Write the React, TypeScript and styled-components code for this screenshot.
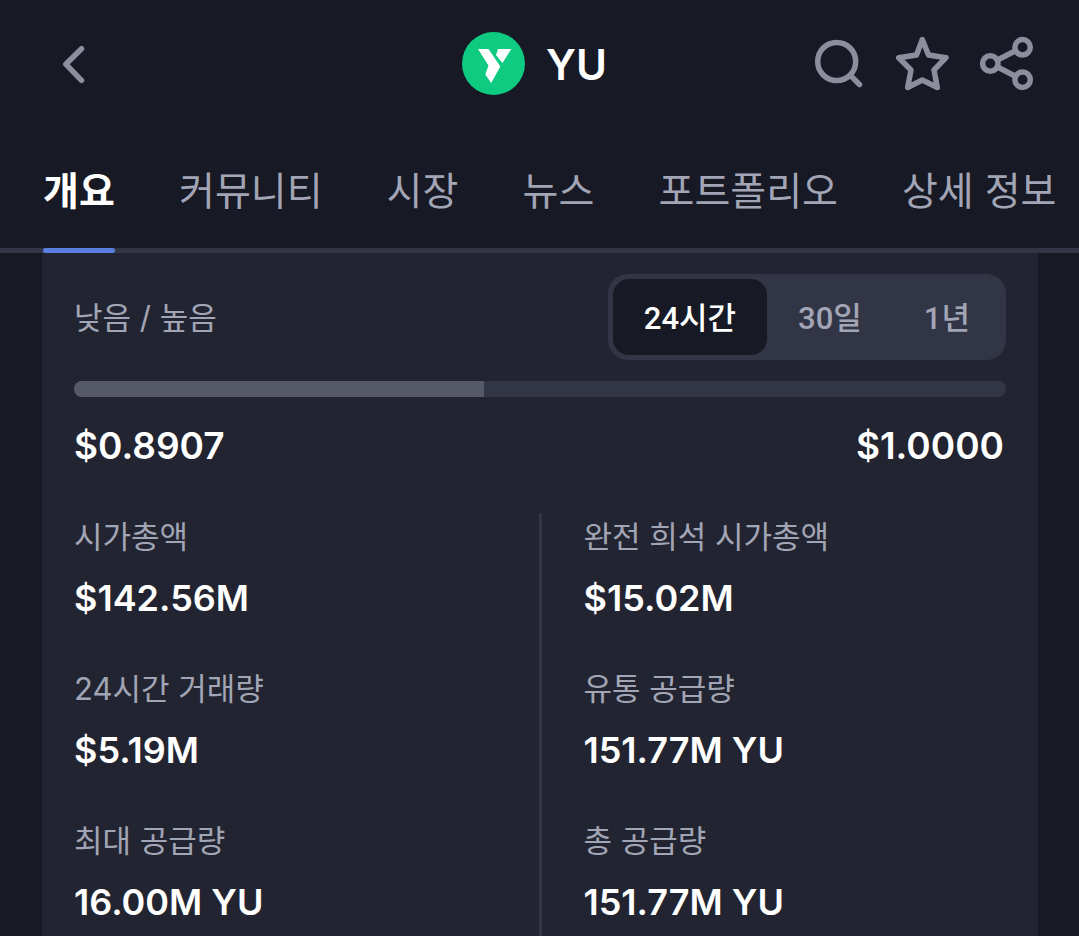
import React, { useState } from 'react';
import styled, { createGlobalStyle } from 'styled-components';

const GlobalStyle = createGlobalStyle`
  * { box-sizing: border-box; }
  body {
    margin: 0;
    background: #171924;
    color: #ffffff;
    font-family: Inter, "Noto Sans CJK KR", sans-serif;
    overflow-x: hidden;
  }
  button { font-family: inherit; border: 0; padding: 0; background: none; cursor: pointer; }
`;

const Page = styled.div`
  display: flex;
  flex-direction: column;
  min-height: 100vh;
  overflow: hidden;
`;

const Header = styled.header`
  display: grid;
  grid-template-columns: 1fr auto 1fr;
  align-items: center;
  height: 126px;
  padding: 0 42px;
  color: #8c8e9e;
`;

const IconButton = styled.button`
  display: flex;
  color: inherit;
`;

const Brand = styled.div`
  display: flex;
  align-items: center;
  gap: 21px;
  margin-right: 10px;
`;

const Ticker = styled.h1`
  margin: 0;
  padding-top: 4px;
  font-size: 42px;
  line-height: 48px;
  font-weight: 600;
  color: #ffffff;
`;

const Actions = styled.div`
  display: flex;
  justify-content: flex-end;
  gap: 24px;
`;

const Tabs = styled.nav`
  display: flex;
  gap: 64px;
  height: 127px;
  padding: 0 43px;
  box-shadow: inset 0 -5px #323546;
`;

const Tab = styled.a<{ $active?: boolean }>`
  position: relative;
  flex: none;
  min-width: 72px;
  padding-top: 37px;
  font-size: 39px;
  line-height: 56px;
  font-weight: ${(p) => (p.$active ? 700 : 400)};
  color: ${(p) => (p.$active ? '#ffffff' : '#a2a5b5')};
  text-decoration: none;
  white-space: nowrap;

  &::after {
    content: '';
    position: absolute;
    left: 0;
    right: 0;
    bottom: 0;
    height: 5px;
    border-radius: 3px;
    background: ${(p) => (p.$active ? '#5b7fe0' : 'transparent')};
  }
`;

const Card = styled.main`
  display: flex;
  flex-direction: column;
  flex: 1;
  margin: 0 41px 0 42px;
  padding: 21px 32px 0;
  background: #222531;
`;

const RangeHead = styled.div`
  display: flex;
  justify-content: space-between;
  align-items: center;
`;

const Label = styled.dt`
  padding-top: 2px;
  font-size: 31px;
  line-height: 44px;
  color: #a2a5b5;
`;

const Segments = styled.div`
  display: flex;
  height: 86px;
  padding: 5px;
  border-radius: 20px;
  background: #323546;
`;

const Segment = styled.button<{ $active?: boolean }>`
  padding: 4px 31px 0;
  border-radius: 16px;
  font-family: Roboto, "Noto Sans CJK KR", sans-serif;
  font-size: 31px;
  line-height: 44px;
  font-weight: 500;
  color: ${(p) => (p.$active ? '#ffffff' : '#a2a5b5')};
  background: ${(p) => (p.$active ? '#171924' : 'transparent')};
`;

const Track = styled.div`
  height: 16px;
  margin-top: 21px;
  border-radius: 8px;
  background: #323546;
  overflow: hidden;
`;

const Fill = styled.div`
  height: 100%;
  background: #555968;
`;

const Prices = styled.div`
  display: flex;
  justify-content: space-between;
  margin-top: 25px;
  padding-right: 2px;
  font-size: 37px;
  line-height: 48px;
  font-weight: 600;
`;

const Stats = styled.div`
  display: grid;
  grid-template-columns: 1fr 3px 1fr;
  flex: 1;
  margin-top: 43px;
`;

const Divider = styled.div`
  background: #323546;
`;

const Column = styled.dl<{ $inset?: boolean }>`
  display: flex;
  flex-direction: column;
  gap: 43px;
  margin: 0;
  padding-left: ${(p) => (p.$inset ? '42px' : '0')};
`;

const Stat = styled.div`
  display: flex;
  flex-direction: column;
  gap: 15px;
`;

const Value = styled.dd`
  margin: 0;
  font-size: 36px;
  line-height: 48px;
  font-weight: 600;
`;

const tabs = ['개요', '커뮤니티', '시장', '뉴스', '포트폴리오', '상세 정보'];
const ranges = ['24시간', '30일', '1년'];
const marketStats = [['시가총액', '$142.56M'], ['24시간 거래량', '$5.19M'], ['최대 공급량', '16.00M YU']];
const supplyStats = [['완전 희석 시가총액', '$15.02M'], ['유통 공급량', '151.77M YU'], ['총 공급량', '151.77M YU']];

function StatList({ items, inset }: { items: string[][]; inset?: boolean }) {
  return (
    <Column $inset={inset}>
      {items.map(([label, value]) => (
        <Stat key={label}>
          <Label>{label}</Label>
          <Value>{value}</Value>
        </Stat>
      ))}
    </Column>
  );
}

function Icon({ children }: { children: React.ReactNode }) {
  return (
    <svg
      width="60"
      height="60"
      viewBox="0 0 60 60"
      fill="none"
      stroke="currentColor"
      strokeWidth="5.5"
      strokeLinecap="round"
      strokeLinejoin="round"
      aria-hidden="true"
    >
      {children}
    </svg>
  );
}

export default function App() {
  const [range, setRange] = useState('24시간');
  return (
    <Page>
      <GlobalStyle />
      <Header>
        <IconButton aria-label="뒤로">
          <Icon>
            <path d="M39.5 15.7 23.8 31.2 39.5 47.3" />
          </Icon>
        </IconButton>
        <Brand>
          <svg width="63" height="63" viewBox="0 0 63 63" aria-hidden="true">
            <circle cx="31.5" cy="31.5" r="31.5" fill="#0ecb81" />
            <path d="M16 17H26.5L38.3 34.5 29.2 51 23.3 42.5 26.5 33.5Z" fill="#fff" />
            <path d="M36 17H49.3L40.500 31 34 23Z" fill="#fff" />
          </svg>
          <Ticker>YU</Ticker>
        </Brand>
        <Actions>
          <IconButton aria-label="검색">
            <Icon>
              <circle cx="27.7" cy="28.5" r="19" />
              <path d="M43 44 50.5 51.5" />
            </Icon>
          </IconButton>
          <IconButton aria-label="관심 목록">
            <Icon>
              <path d="M29.3 6.5 35.5 22 53 24.7 41 37 44.3 54.5 29.3 47 14.7 54.5 18 37 5.7 24.7 23.5 22Z" />
            </Icon>
          </IconButton>
          <IconButton aria-label="공유">
            <Icon>
              <circle cx="13.3" cy="30.5" r="7.7" />
              <circle cx="45.6" cy="14.3" r="7.7" />
              <circle cx="45.6" cy="46.7" r="7.7" />
              <path d="M20.5 27 38 18M20.5 34 38 43" />
            </Icon>
          </IconButton>
        </Actions>
      </Header>
      <Tabs>
        {tabs.map((t, i) => (
          <Tab key={t} href="#" $active={i === 0}>{t}</Tab>
        ))}
      </Tabs>
      <Card>
        <RangeHead>
          <Label as="span">낮음 / 높음</Label>
          <Segments>
            {ranges.map((r) => (
              <Segment key={r} $active={r === range} onClick={() => setRange(r)}>{r}</Segment>
            ))}
          </Segments>
        </RangeHead>
        <Track>
          <Fill style={{ width: '44%' }} />
        </Track>
        <Prices>
          <span>$0.8907</span>
          <span>$1.0000</span>
        </Prices>
        <Stats>
          <StatList items={marketStats} />
          <Divider />
          <StatList items={supplyStats} inset />
        </Stats>
      </Card>
    </Page>
  );
}
